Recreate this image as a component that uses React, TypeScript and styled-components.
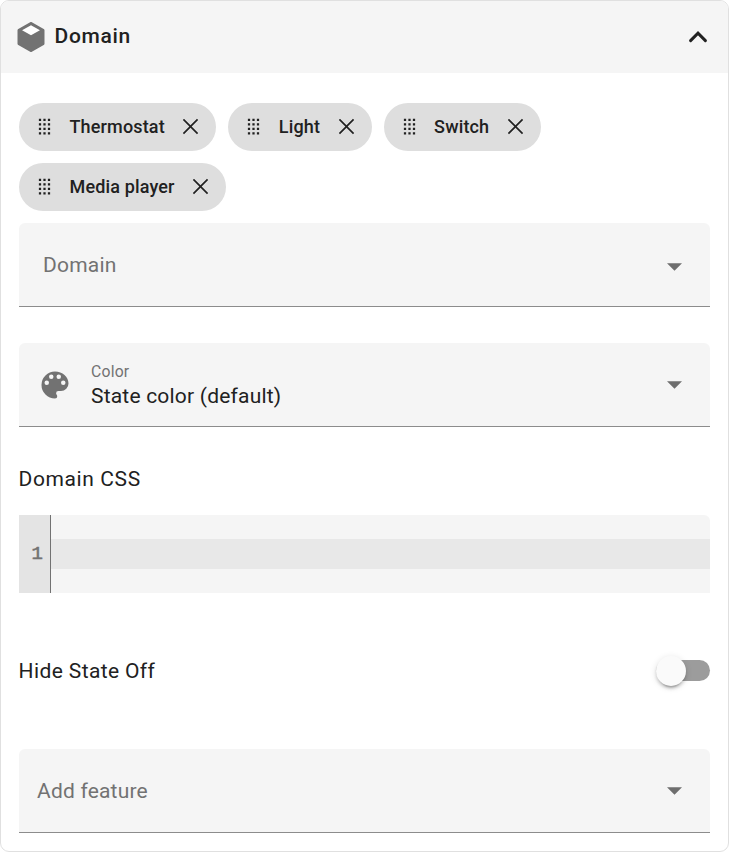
import React from "react";
import styled, { createGlobalStyle } from "styled-components";

const GlobalStyle = createGlobalStyle`
  * { box-sizing: border-box; }
  body { margin: 0; background: #fff; }
`;

const Card = styled.section`
  width: 729px;
  height: 852px;
  border: 1px solid #e0e0e0;
  border-radius: 9px;
  background: #fff;
  color: #212121;
  font-family: Roboto, "Liberation Sans", sans-serif;
  font-size: 21px;
  line-height: 30px;
  overflow: hidden;
`;

const Header = styled.header`
  display: flex;
  align-items: center;
  height: 72px;
  padding: 0 12px;
  background: #f5f5f5;
`;

const Title = styled.h2`
  flex: 1;
  margin: 0 0 2px 5.5px;
  font-size: 21px;
  font-weight: 500;
  line-height: 30px;
  letter-spacing: 0.7px;
`;

const Icon = styled.svg<{ $size: number }>`
  display: block;
  flex: none;
  width: ${(p) => p.$size}px;
  height: ${(p) => p.$size}px;
  fill: currentColor;
`;

const Muted = styled.span`
  color: #727272;
`;

const Body = styled.div`
  display: flex;
  flex-direction: column;
  padding: 30px 18px 0;
`;

const Chips = styled.div`
  display: flex;
  flex-wrap: wrap;
  gap: 12px;
  margin-bottom: 12px;
`;

const Chip = styled.div`
  display: flex;
  align-items: center;
  height: 48px;
  padding: 0 12px;
  border-radius: 24px;
  background: #dedede;
  font-size: 18px;
  font-weight: 500;

  svg {
    margin-bottom: 1px;
  }
`;

const ChipLabel = styled.span`
  margin: 0 12.5px 0 11.5px;
  letter-spacing: 0.15px;
  white-space: nowrap;
`;

const Select = styled.div<{ $pad: number; $gap: number }>`
  display: flex;
  align-items: center;
  height: 84px;
  margin-bottom: ${(p) => p.$gap}px;
  padding: 0 28px 0 ${(p) => p.$pad}px;
  border-bottom: 1px solid #8c8c8c;
  border-radius: 6px 6px 0 0;
  background: #f5f5f5;
`;

const SelectText = styled.div<{ $top?: number }>`
  display: flex;
  flex: 1;
  flex-direction: column;
  padding-top: ${(p) => p.$top ?? 0}px;
  letter-spacing: 0.2px;
`;

const Caption = styled.span`
  color: #727272;
  font-size: 15.75px;
  line-height: 19px;
`;

const Arrow = styled.svg<{ $drop?: number }>`
  display: block;
  width: 15px;
  height: 8px;
  margin-top: ${(p) => p.$drop ?? 0}px;
  fill: #6e6e6e;
`;

const PaletteSlot = styled.div`
  margin-right: 18px;
  color: #727272;
`;

const Label = styled.div<{ $spacing: number }>`
  margin-left: -0.4px;
  letter-spacing: ${(p) => p.$spacing}px;
`;

const Editor = styled.div`
  display: flex;
  height: 78px;
  margin: 21px 0 62px;
  border-radius: 0 6px 0 0;
  background: #f5f5f5;
  overflow: hidden;
`;

const Gutter = styled.div`
  width: 32px;
  padding: 24px 7px 0 0;
  border-right: 1px solid #727272;
  background: #e4e4e4;
  color: #727272;
  font-family: "Liberation Mono", monospace;
  font-size: 19px;
  line-height: 31px;
  text-align: right;
  -webkit-text-stroke: 0.6px #727272;
`;

const ActiveLine = styled.div`
  flex: 1;
  height: 30px;
  margin-top: 24px;
  background: #e8e8e8;
`;

const ToggleRow = styled.div`
  display: flex;
  align-items: center;
  justify-content: space-between;
  height: 32px;
  margin-bottom: 62px;
`;

const Track = styled.div`
  display: flex;
  align-items: center;
  width: 54px;
  height: 21px;
  margin-bottom: 1px;
  border-radius: 11px;
  background: #9c9c9c;
`;

const Thumb = styled.div`
  flex: none;
  width: 30px;
  height: 30px;
  border-radius: 50%;
  background: #fafafa;
  box-shadow: 0 4.5px 1.5px -3px rgba(0, 0, 0, 0.2),
    0 3px 3px rgba(0, 0, 0, 0.14), 0 1.5px 7.5px rgba(0, 0, 0, 0.12);
`;

const CUBE =
  "M21,16.5C21,16.88 20.79,17.21 20.47,17.38L12.57,21.82C12.41,21.94 12.21,22 12,22C11.79,22 11.59,21.94 11.43,21.82L3.53,17.38C3.21,17.21 3,16.88 3,16.5V7.5C3,7.12 3.21,6.79 3.53,6.62L11.43,2.18C11.59,2.06 11.79,2 12,2C12.21,2 12.41,2.06 12.57,2.18L20.47,6.62C20.79,6.79 21,7.12 21,7.5V16.5Z";
const PALETTE =
  "M17.5,12A1.5,1.5 0 0,1 16,10.5A1.5,1.5 0 0,1 17.5,9A1.5,1.5 0 0,1 19,10.5A1.5,1.5 0 0,1 17.5,12M14.5,8A1.5,1.5 0 0,1 13,6.5A1.5,1.5 0 0,1 14.5,5A1.5,1.5 0 0,1 16,6.5A1.5,1.5 0 0,1 14.5,8M9.5,8A1.5,1.5 0 0,1 8,6.5A1.5,1.5 0 0,1 9.5,5A1.5,1.5 0 0,1 11,6.5A1.5,1.5 0 0,1 9.5,8M6.5,12A1.5,1.5 0 0,1 5,10.5A1.5,1.5 0 0,1 6.5,9A1.5,1.5 0 0,1 8,10.5A1.5,1.5 0 0,1 6.5,12M12,3A9,9 0 0,0 3,12A9,9 0 0,0 12,21A1.5,1.5 0 0,0 13.5,19.5C13.5,19.11 13.35,18.76 13.11,18.5C12.88,18.23 12.73,17.88 12.73,17.5A1.5,1.5 0 0,1 14.23,16H16A5,5 0 0,0 21,11C21,6.58 16.97,3 12,3Z";
const DRAG = [5, 9, 13, 17]
  .map((y) => [7, 11, 15].map((x) => `M${x},${y}h2v2h-2z`).join(""))
  .join("");
const CLOSE =
  "m249 849-42-42 231-231-231-231 42-42 231 231 231-231 42 42-231 231 231 231-42 42-231-231-231 231Z";

const DOMAINS = ["Thermostat", "Light", "Switch", "Media player"];

const DropArrow = ({ drop }: { drop?: number }) => (
  <Arrow viewBox="0 0 15 8" $drop={drop}>
    <path d="M0 .2h15L7.5 7.8z" />
  </Arrow>
);

export default function App() {
  return (
    <>
      <GlobalStyle />
      <Card>
        <Header>
          <Muted>
            <Icon $size={36} viewBox="0 0 24 24">
              <path d={CUBE} />
              <path d="M12,4.15L6.04,7.5L12,10.85L17.96,7.5Z" fill="#fff" />
            </Icon>
          </Muted>
          <Title>Domain</Title>
          <Icon $size={36} viewBox="0 0 36 36">
            <path
              d="M10.6 21.6 18 14.2l7.4 7.4"
              fill="none"
              stroke="#212121"
              strokeWidth="3"
              strokeLinecap="round"
            />
          </Icon>
        </Header>
        <Body>
          <Chips>
            {DOMAINS.map((name) => (
              <Chip key={name}>
                <Icon $size={27} viewBox="0 0 24 24">
                  <path d={DRAG} />
                </Icon>
                <ChipLabel>{name}</ChipLabel>
                <Icon $size={27} viewBox="0 96 960 960">
                  <path d={CLOSE} />
                </Icon>
              </Chip>
            ))}
          </Chips>
          <Select $pad={24} $gap={36}>
            <SelectText>
              <Muted>Domain</Muted>
            </SelectText>
            <DropArrow drop={4} />
          </Select>
          <Select $pad={18} $gap={37}>
            <PaletteSlot>
              <Icon $size={36} viewBox="0 0 24 24">
                <path d={PALETTE} />
              </Icon>
            </PaletteSlot>
            <SelectText $top={4}>
              <Caption>Color</Caption>
              <span>State color (default)</span>
            </SelectText>
            <DropArrow />
          </Select>
          <Label $spacing={0.6}>Domain CSS</Label>
          <Editor>
            <Gutter>1</Gutter>
            <ActiveLine />
          </Editor>
          <ToggleRow>
            <Label $spacing={0.38}>Hide State Off</Label>
            <Track role="switch" aria-checked={false}>
              <Thumb />
            </Track>
          </ToggleRow>
          <Select $pad={18} $gap={0}>
            <SelectText>
              <Muted>Add feature</Muted>
            </SelectText>
            <DropArrow />
          </Select>
        </Body>
      </Card>
    </>
  );
}
